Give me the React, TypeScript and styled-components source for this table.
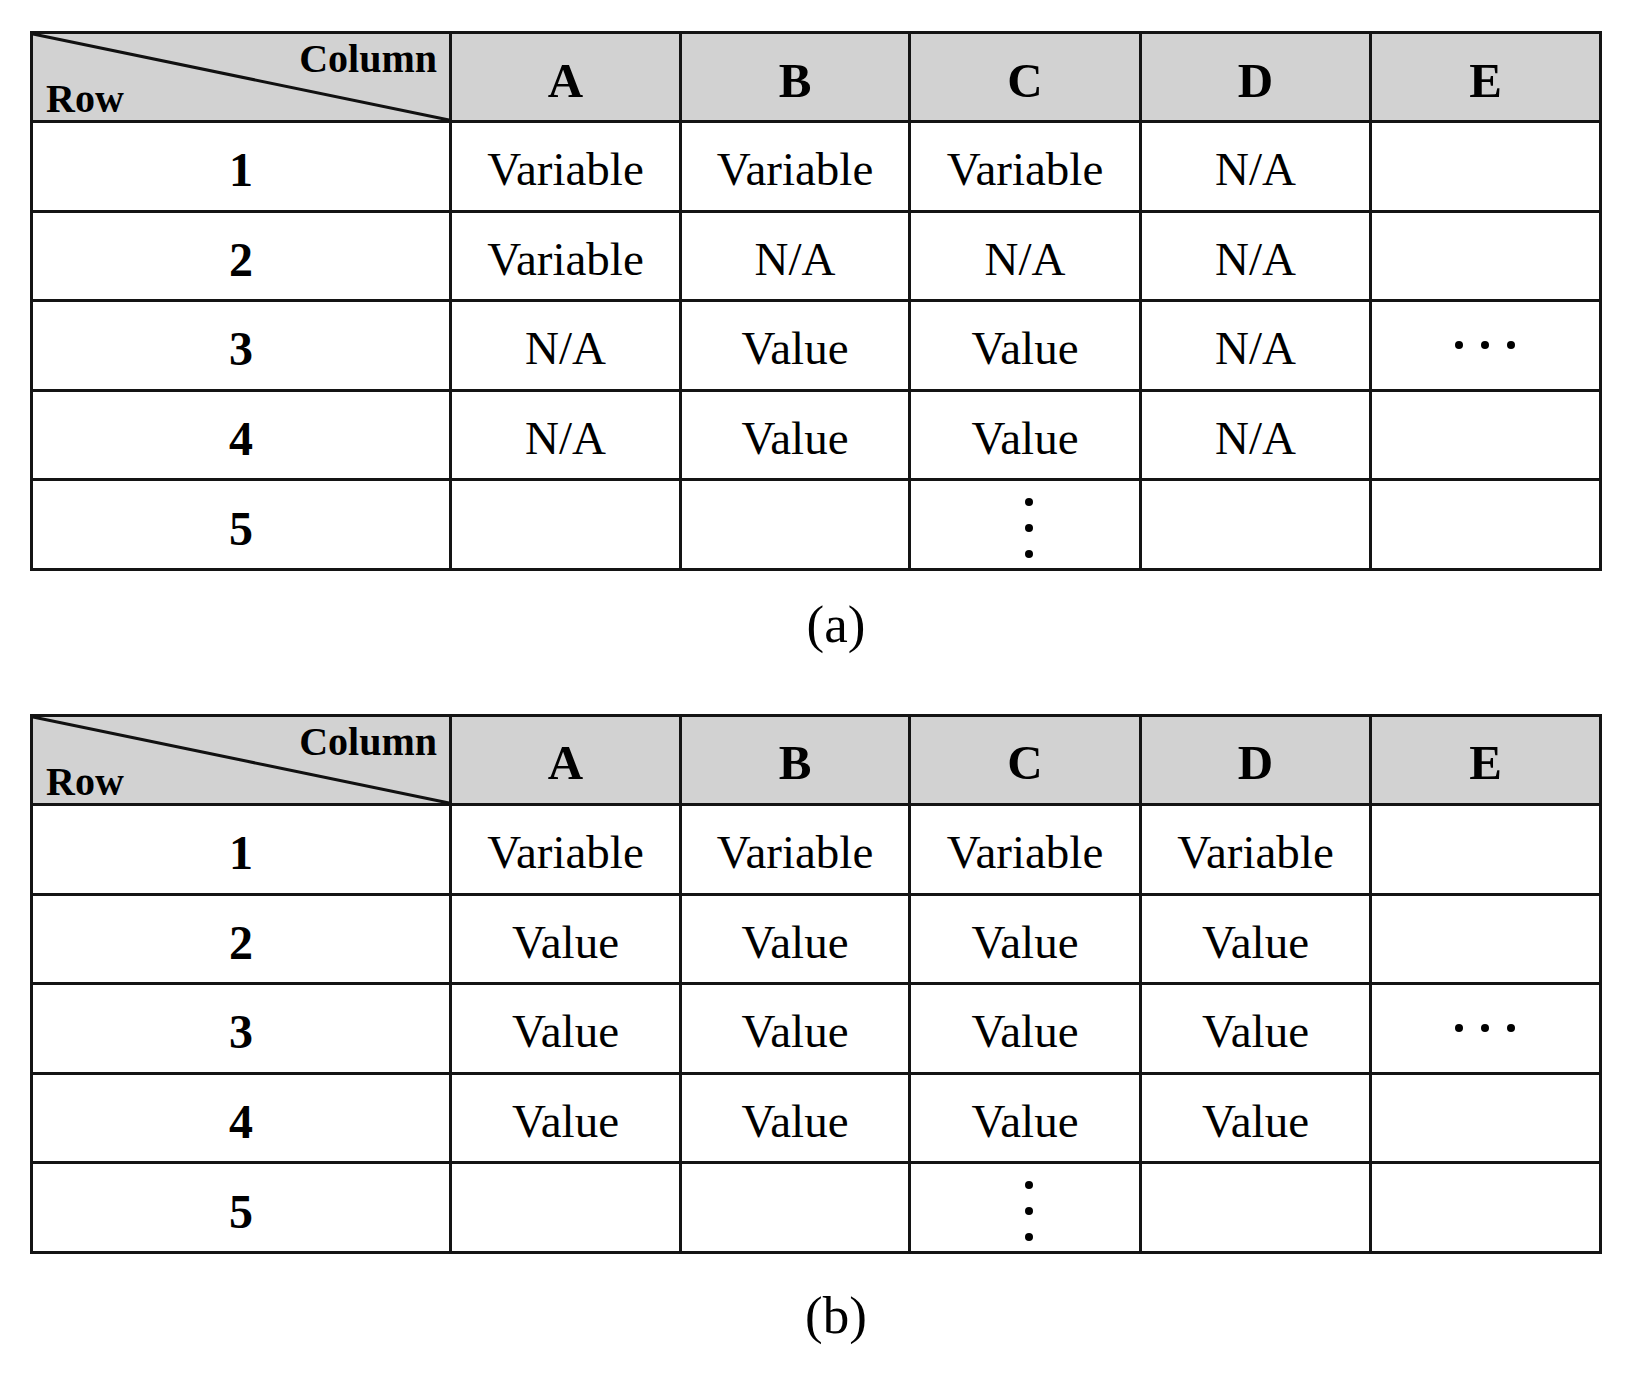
import React from "react";
import styled, { createGlobalStyle } from "styled-components";

const Global = createGlobalStyle`
  html, body { margin: 0; padding: 0; background: #ffffff; }
  body { font-family: "Liberation Serif", "Times New Roman", serif; color: #000; }
`;

const Page = styled.div`
  padding: 31px 0 0 30px;
  width: 1572px;
`;

const Grid = styled.div`
  display: grid;
  grid-template-columns: 416px 227px 226px 228px 227px 227px;
  grid-template-rows: 86px repeat(5, 86.6px);
  gap: 3px;
  padding: 3px;
  background: #141414;
  width: max-content;
`;

const Corner = styled.div`
  position: relative;
  background: #d2d2d2;
  display: flex;
  flex-direction: column;
  justify-content: space-between;
  padding: 5px 12px 1px 13px;
  font-weight: 700;
  font-size: 40px;
  line-height: 40px;
`;

const Diagonal = styled.svg`
  position: absolute;
  inset: 0;
  width: 100%;
  height: 100%;
  overflow: visible;
`;

const ColumnLabel = styled.span`
  position: relative;
  align-self: flex-end;
`;

const RowLabel = styled.span`
  position: relative;
  align-self: flex-start;
`;

const HeadCell = styled.div`
  background: #d2d2d2;
  display: flex;
  align-items: center;
  justify-content: center;
  padding-top: 6px;
  font-weight: 700;
  font-size: 49px;
`;

const RowHead = styled.div`
  background: #fff;
  display: flex;
  align-items: center;
  justify-content: center;
  padding-top: 7px;
  font-weight: 700;
  font-size: 48px;
`;

const DataCell = styled.div`
  background: #fff;
  display: flex;
  align-items: center;
  justify-content: center;
  padding-top: 6px;
  font-size: 47px;
`;

const DotsCell = styled.div<{ $shiftX: number; $shiftY: number }>`
  background: #fff;
  display: flex;
  align-items: center;
  justify-content: center;
  padding-left: ${(p) => (p.$shiftX > 0 ? p.$shiftX * 2 : 0)}px;
  padding-right: ${(p) => (p.$shiftX < 0 ? -p.$shiftX * 2 : 0)}px;
  padding-top: ${(p) => (p.$shiftY > 0 ? p.$shiftY * 2 : 0)}px;
  padding-bottom: ${(p) => (p.$shiftY < 0 ? -p.$shiftY * 2 : 0)}px;
`;

const Dots = styled.div<{ $vertical?: boolean }>`
  display: flex;
  flex-direction: ${(p) => (p.$vertical ? "column" : "row")};
  gap: 18px;
`;

const Dot = styled.span`
  width: 8px;
  height: 8px;
  border-radius: 50%;
  background: #000;
`;

const Caption = styled.div<{ $top: number; $bottom: number }>`
  width: 1572px;
  box-sizing: border-box;
  padding-left: 40px;
  text-align: center;
  font-size: 53px;
  line-height: 60px;
  margin-top: ${(p) => p.$top}px;
  margin-bottom: ${(p) => p.$bottom}px;
`;

type Row = string[];

const tableA: Row[] = [
  ["Variable", "Variable", "Variable", "N/A"],
  ["Variable", "N/A", "N/A", "N/A"],
  ["N/A", "Value", "Value", "N/A"],
  ["N/A", "Value", "Value", "N/A"],
];

const tableB: Row[] = [
  ["Variable", "Variable", "Variable", "Variable"],
  ["Value", "Value", "Value", "Value"],
  ["Value", "Value", "Value", "Value"],
  ["Value", "Value", "Value", "Value"],
];

const ThreeDots: React.FC<{ vertical?: boolean }> = ({ vertical }) => (
  <Dots $vertical={vertical}>
    <Dot />
    <Dot />
    <Dot />
  </Dots>
);

const DataTable: React.FC<{ rows: Row[] }> = ({ rows }) => (
  <Grid>
    <Corner>
      <Diagonal viewBox="0 0 100 100" preserveAspectRatio="none">
        <line
          x1="0"
          y1="0"
          x2="100"
          y2="100"
          stroke="#111"
          strokeWidth="3"
          vectorEffect="non-scaling-stroke"
        />
      </Diagonal>
      <ColumnLabel>Column</ColumnLabel>
      <RowLabel>Row</RowLabel>
    </Corner>
    {["A", "B", "C", "D", "E"].map((h) => (
      <HeadCell key={h}>{h}</HeadCell>
    ))}
    {rows.map((r, i) => (
      <React.Fragment key={i}>
        <RowHead>{i + 1}</RowHead>
        {r.map((v, j) => (
          <DataCell key={j}>{v}</DataCell>
        ))}
        {i === 2 ? (
          <DotsCell $shiftX={-1} $shiftY={0}>
            <ThreeDots />
          </DotsCell>
        ) : (
          <DataCell />
        )}
      </React.Fragment>
    ))}
    <RowHead>5</RowHead>
    <DataCell />
    <DataCell />
    <DotsCell $shiftX={4} $shiftY={3}>
      <ThreeDots vertical />
    </DotsCell>
    <DataCell />
    <DataCell />
  </Grid>
);

export default function App() {
  return (
    <>
      <Global />
      <Page>
        <DataTable rows={tableA} />
        <Caption $top={23} $bottom={60}>(a)</Caption>
        <DataTable rows={tableB} />
        <Caption $top={31} $bottom={0}>(b)</Caption>
      </Page>
    </>
  );
}
